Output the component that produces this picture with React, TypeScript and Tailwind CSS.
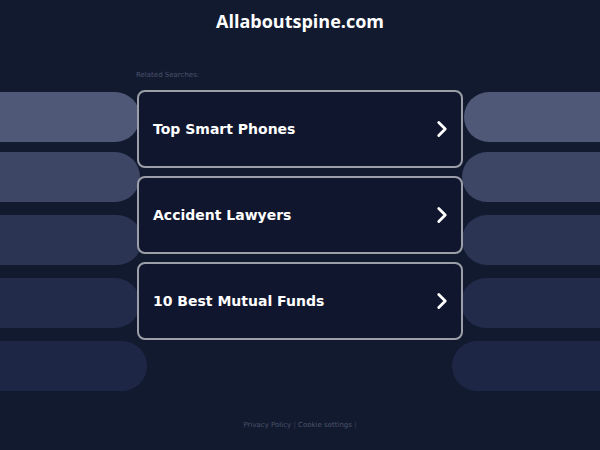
import React from 'react';
import { ChevronRight } from 'lucide-react';

const bars = [
    { color: 'bg-[#4f5876]', left: 'w-[140px]', right: 'w-[136px]', top: 'mt-[2px]' },
    { color: 'bg-[#3d4664]', left: 'w-[140px]', right: 'w-[138px]', top: 'mt-[10px]' },
    { color: 'bg-[#2c3453]', left: 'w-[142px]', right: 'w-[138px]', top: 'mt-[13px]' },
    { color: 'bg-[#232b4b]', left: 'w-[140px]', right: 'w-[139px]', top: 'mt-[13px]' },
    { color: 'bg-[#1e2646]', left: 'w-[147px]', right: 'w-[148px]', top: 'mt-[13px]' },
];

const searches = ['Top Smart Phones', 'Accident Lawyers', '10 Best Mutual Funds'];

const App: React.FC = () => {
    return (
        <div className="w-[600px] h-[450px] bg-[#121a30] overflow-hidden flex flex-col font-['DejaVu_Sans',sans-serif]">
            <h1 className="h-[40px] pt-[8px] text-center text-[18px] font-bold text-white font-['Open_Sans',sans-serif]">
                Allaboutspine.com
            </h1>

            <p className="mt-[30px] pl-[136px] text-[7px] leading-[10px] text-[#4a5369]">Related Searches:</p>

            <div className="grid mt-[10px]">
                {/* decorative side bars */}
                <div className="[grid-area:1/1] flex flex-col">
                    {bars.map((b, i) => (
                        <div key={i} className={`flex justify-between h-[50px] ${b.top}`}>
                            <div className={`${b.left} ${b.color} rounded-r-full`} />
                            <div className={`${b.right} ${b.color} rounded-l-full`} />
                        </div>
                    ))}
                </div>

                {/* search cards */}
                <div className="[grid-area:1/1] flex flex-col gap-[8px] pl-[137px] pr-[137px]">
                    {searches.map((s) => (
                        <div
                            key={s}
                            className="h-[78px] bg-[#10162e] border-2 border-[#9c9fa8] rounded-[8px] flex items-center justify-between pl-[14px] pr-[6px]"
                        >
                            <span className="text-[14px] font-bold text-white">{s}</span>
                            <ChevronRight size={26} strokeWidth={2.6} className="text-white" />
                        </div>
                    ))}
                </div>
            </div>

            <div className="mt-[29px] text-center text-[7px] text-[#4b5369]">
                Privacy Policy <span className="text-[#363e55]">|</span> Cookie settings <span className="text-[#363e55]">|</span>
            </div>
        </div>
    );
};

export default App;
